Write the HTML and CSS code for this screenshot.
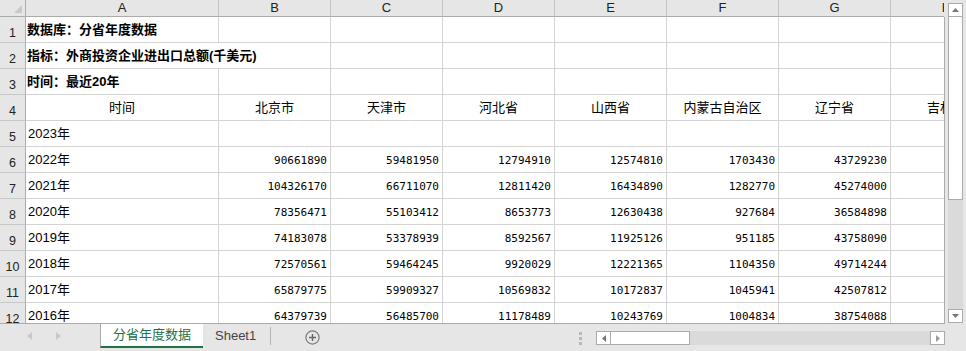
FILE: index.html
```html
<!DOCTYPE html>
<html lang="zh-CN">
<head>
    <meta charset="UTF-8">
    <title>分省年度数据</title>
    <link rel="stylesheet" href="styles.css">
</head>
<body>
    <div class="app">
        <div class="main">
            <div class="sheet">
                <!-- column letters -->
                <div class="grid colheads">
                    <div class="corner"><span class="corner-tri"></span></div>
                    <div class="ch">A</div>
                    <div class="ch">B</div>
                    <div class="ch">C</div>
                    <div class="ch">D</div>
                    <div class="ch">E</div>
                    <div class="ch">F</div>
                    <div class="ch">G</div>
                    <div class="ch">H</div>
                </div>

                <div class="grid rows">
                    <div class="rh">1</div>
                    <div class="c bold">数据库：分省年度数据</div>
                    <div class="c"></div><div class="c"></div><div class="c"></div><div class="c"></div><div class="c"></div><div class="c"></div><div class="c"></div>

                    <div class="rh">2</div>
                    <div class="c bold span2">指标：外商投资企业进出口总额(千美元)</div>
                    <div class="c"></div><div class="c"></div><div class="c"></div><div class="c"></div><div class="c"></div><div class="c"></div>

                    <div class="rh">3</div>
                    <div class="c bold">时间：最近20年</div>
                    <div class="c"></div><div class="c"></div><div class="c"></div><div class="c"></div><div class="c"></div><div class="c"></div><div class="c"></div>

                    <div class="rh">4</div>
                    <div class="c mid">时间</div>
                    <div class="c mid">北京市</div>
                    <div class="c mid">天津市</div>
                    <div class="c mid">河北省</div>
                    <div class="c mid">山西省</div>
                    <div class="c mid">内蒙古自治区</div>
                    <div class="c mid">辽宁省</div>
                    <div class="c mid">吉林省</div>

                    <div class="rh">5</div>
                    <div class="c">2023年</div>
                    <div class="c"></div><div class="c"></div><div class="c"></div><div class="c"></div><div class="c"></div><div class="c"></div><div class="c"></div>

                    <div class="rh">6</div>
                    <div class="c">2022年</div>
                    <div class="c n">90661890</div>
                    <div class="c n">59481950</div>
                    <div class="c n">12794910</div>
                    <div class="c n">12574810</div>
                    <div class="c n">1703430</div>
                    <div class="c n">43729230</div>
                    <div class="c"></div>

                    <div class="rh">7</div>
                    <div class="c">2021年</div>
                    <div class="c n">104326170</div>
                    <div class="c n">66711070</div>
                    <div class="c n">12811420</div>
                    <div class="c n">16434890</div>
                    <div class="c n">1282770</div>
                    <div class="c n">45274000</div>
                    <div class="c"></div>

                    <div class="rh">8</div>
                    <div class="c">2020年</div>
                    <div class="c n">78356471</div>
                    <div class="c n">55103412</div>
                    <div class="c n">8653773</div>
                    <div class="c n">12630438</div>
                    <div class="c n">927684</div>
                    <div class="c n">36584898</div>
                    <div class="c"></div>

                    <div class="rh">9</div>
                    <div class="c">2019年</div>
                    <div class="c n">74183078</div>
                    <div class="c n">53378939</div>
                    <div class="c n">8592567</div>
                    <div class="c n">11925126</div>
                    <div class="c n">951185</div>
                    <div class="c n">43758090</div>
                    <div class="c"></div>

                    <div class="rh">10</div>
                    <div class="c">2018年</div>
                    <div class="c n">72570561</div>
                    <div class="c n">59464245</div>
                    <div class="c n">9920029</div>
                    <div class="c n">12221365</div>
                    <div class="c n">1104350</div>
                    <div class="c n">49714244</div>
                    <div class="c"></div>

                    <div class="rh">11</div>
                    <div class="c">2017年</div>
                    <div class="c n">65879775</div>
                    <div class="c n">59909327</div>
                    <div class="c n">10569832</div>
                    <div class="c n">10172837</div>
                    <div class="c n">1045941</div>
                    <div class="c n">42507812</div>
                    <div class="c"></div>

                    <div class="rh">12</div>
                    <div class="c">2016年</div>
                    <div class="c n">64379739</div>
                    <div class="c n">56485700</div>
                    <div class="c n">11178489</div>
                    <div class="c n">10243769</div>
                    <div class="c n">1004834</div>
                    <div class="c n">38754088</div>
                    <div class="c"></div>
                </div>
            </div>

            <!-- vertical scrollbar -->
            <div class="vscroll">
                <div class="sbtn">
                    <svg width="7" height="4" viewBox="0 0 7 4"><path d="M0 4 L3.5 0 L7 4 Z" fill="#777"/></svg>
                </div>
                <div class="vthumb"></div>
                <div class="vtrack"></div>
                <div class="sbtn vdown">
                    <svg width="7" height="4" viewBox="0 0 7 4"><path d="M0 0 L3.5 4 L7 0 Z" fill="#777"/></svg>
                </div>
            </div>
        </div>

        <div class="tabbar">
            <div class="tabnav">
                <svg width="5" height="8" viewBox="0 0 5 8"><path d="M5 0 L0 4 L5 8 Z" fill="#c8c8c8"/></svg>
                <svg width="5" height="8" viewBox="0 0 5 8"><path d="M0 0 L5 4 L0 8 Z" fill="#c8c8c8"/></svg>
            </div>
            <div class="tab active">分省年度数据</div>
            <div class="tab">Sheet1</div>
            <div class="tabsep"></div>
            <div class="addsheet">
                <svg width="15" height="15" viewBox="0 0 15 15">
                    <circle cx="7.5" cy="7.5" r="6.6" fill="none" stroke="#7a7a7a" stroke-width="1.2"/>
                    <path d="M7.5 4 V11 M4 7.5 H11" stroke="#666" stroke-width="1.4"/>
                </svg>
            </div>
            <div class="spacer"></div>
            <div class="dots">
                <svg width="3" height="13" viewBox="0 0 3 13">
                    <rect x="0" y="0" width="3" height="3" fill="#b8b8b8"/>
                    <rect x="0" y="5" width="3" height="3" fill="#b8b8b8"/>
                    <rect x="0" y="10" width="3" height="3" fill="#b8b8b8"/>
                </svg>
            </div>
            <div class="hscroll">
                <div class="sbtn">
                    <svg width="4" height="7" viewBox="0 0 4 7"><path d="M4 0 L0 3.5 L4 7 Z" fill="#777"/></svg>
                </div>
                <div class="hthumb"></div>
                <div class="htrack"></div>
                <div class="sbtn">
                    <svg width="4" height="7" viewBox="0 0 4 7"><path d="M0 0 L4 3.5 L0 7 Z" fill="#999"/></svg>
                </div>
            </div>
        </div>
    </div>
</body>
</html>
```

FILE: styles.css
```css
body {
    margin: 0;
    padding: 0;
    background-color: #e6e6e6;
    font-family: "Liberation Sans", "Noto Sans CJK SC", sans-serif;
    color: #000;
}

.app {
    width: 966px;
    height: 351px;
    display: flex;
    flex-direction: column;
    overflow: hidden;
}

.main {
    display: flex;
    height: 324px;
}

.sheet {
    width: 945px;
    height: 324px;
    display: flex;
    flex-direction: column;
}

.grid {
    display: grid;
    grid-template-columns: 26px 193px repeat(7, 112px);
}

/* column letters */
.colheads {
    width: 944px;
    height: 17px;
    overflow: hidden;
    flex: none;
}

.corner,
.ch {
    box-sizing: border-box;
    height: 17px;
    background-color: #e6e6e6;
    border-bottom: 1px solid #ababab;
}

.corner {
    border-right: 1px solid #ababab;
    position: relative;
}

.corner-tri {
    position: absolute;
    right: 3px;
    bottom: 3px;
    width: 0;
    height: 0;
    border-left: 8px solid transparent;
    border-bottom: 8px solid #c9c9c9;
}

.ch {
    border-right: 1px solid #c4c4c4;
    text-align: center;
    font-size: 13px;
    line-height: 16px;
    color: #222;
}

/* cells */
.rows {
    flex: 1;
    box-sizing: border-box;
    width: 945px;
    overflow: hidden;
    background-color: #fff;
    border-right: 1px solid #ababab;
    border-bottom: 1px solid #ababab;
    grid-auto-rows: 26px;
}

.rh {
    box-sizing: border-box;
    background-color: #e6e6e6;
    border-right: 1px solid #ababab;
    border-bottom: 1px solid #c8c8c8;
    display: flex;
    align-items: flex-end;
    justify-content: center;
    padding-bottom: 2px;
    font-size: 12.5px;
    line-height: 14px;
    color: #222;
}

.c {
    box-sizing: border-box;
    border-right: 1px solid #d4d4d4;
    border-bottom: 1px solid #d4d4d4;
    padding: 0 2px;
    font-size: 13px;
    line-height: 25px;
    white-space: nowrap;
}

.bold {
    font-weight: bold;
    padding-left: 1px;
}

.span2 {
    grid-column: span 2;
}

.mid {
    text-align: center;
}

.n {
    text-align: right;
    padding-right: 3px;
    font-family: "DejaVu Sans Mono", "Liberation Mono", monospace;
    font-size: 11px;
    line-height: 28px;
}

/* scrollbars */
.sbtn {
    box-sizing: border-box;
    width: 15px;
    height: 14px;
    background-color: #fff;
    border: 1px solid #ababab;
    display: flex;
    align-items: center;
    justify-content: center;
    flex: none;
}

.vscroll {
    width: 21px;
    box-sizing: border-box;
    padding: 3px 0 0 3px;
    display: flex;
    flex-direction: column;
}

.vthumb {
    width: 15px;
    height: 183px;
    box-sizing: border-box;
    background-color: #fff;
    border: 1px solid #ababab;
    border-top: none;
}

.vtrack {
    width: 15px;
    flex: 1;
    background-color: #dadada;
}

.vdown {
    margin-bottom: 1px;
}

/* sheet tabs */
.tabbar {
    height: 27px;
    display: flex;
    align-items: flex-start;
}

.tabnav {
    width: 100px;
    height: 24px;
    box-sizing: border-box;
    padding-left: 27px;
    display: flex;
    align-items: center;
    gap: 24px;
}

.tab {
    height: 24px;
    box-sizing: border-box;
    padding-left: 12px;
    width: 67px;
    font-size: 13px;
    line-height: 24px;
    color: #444;
}

.tab.active {
    width: 103px;
    padding: 0;
    background-color: #fff;
    border-left: 1px solid #ababab;
    border-bottom: 2px solid #217346;
    color: #217346;
    text-align: center;
    line-height: 22px;
}

.tabsep {
    width: 1px;
    height: 18px;
    margin-top: 3px;
    background-color: #b4b4b4;
}

.addsheet {
    margin: 6px 0 0 34px;
    height: 15px;
}

.spacer {
    flex: 1;
}

.dots {
    margin: 7px 14px 0 0;
    height: 13px;
}

.hscroll {
    width: 349px;
    height: 14px;
    margin: 7px 21px 0 0;
    display: flex;
}

.hthumb {
    width: 79px;
    box-sizing: border-box;
    background-color: #fff;
    border: 1px solid #ababab;
    border-left: none;
}

.htrack {
    flex: 1;
    background-color: #dadada;
}
```
